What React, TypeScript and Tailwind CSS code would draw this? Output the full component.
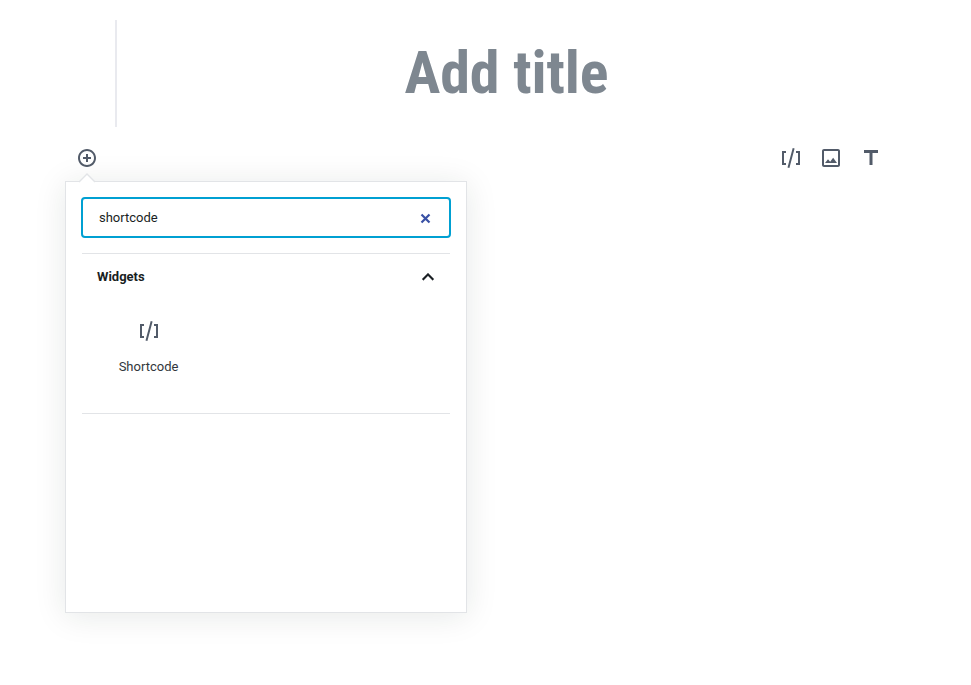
import React from "react";

function ShortcodeIcon() {
  return (
    <svg width="24" height="24" viewBox="0 0 24 24" fill="currentColor">
      <path d="M8.5,21.4l1.9,0.5l5.2-19.3l-1.9-0.5L8.5,21.4z M3,19h4v-2H5V7h2V5H3V19z M17,5v2h2v10h-2v2h4V5H17z" />
    </svg>
  );
}

function ImageIcon() {
  return (
    <svg width="24" height="24" viewBox="0 0 24 24" fill="currentColor">
      <path d="m19 5v14h-14v-14h14m0-2h-14c-1.1 0-2 0.9-2 2v14c0 1.1 0.9 2 2 2h14c1.1 0 2-0.9 2-2v-14c0-1.1-0.9-2-2-2z" />
      <path d="m14.14 11.86l-3 3.87-2.14-2.59-3 3.86h12l-3.86-5.14z" />
    </svg>
  );
}

function TextIcon() {
  return (
    <svg width="24" height="24" viewBox="0 0 24 24" fill="currentColor">
      <path d="M5 4v3h5.5v12h3V7H19V4z" />
    </svg>
  );
}

function InsertIcon() {
  return (
    <svg width="20" height="20" viewBox="0 0 20 20" fill="currentColor">
      <path d="M10 1c-5 0-9 4-9 9s4 9 9 9 9-4 9-9-4-9-9-9zm0 16c-3.9 0-7-3.1-7-7s3.1-7 7-7 7 3.1 7 7-3.1 7-7 7zm1-11H9v3H6v2h3v3h2v-3h3V9h-3V6z" />
    </svg>
  );
}

function InserterPopover() {
  return (
    <section className="relative mt-[11px] ml-[65px] flex h-[432px] w-[402px] flex-col border border-[#e2e4e7] bg-white px-[15px] pt-[15px] text-[13px] shadow-[0_3px_30px_rgba(20,35,32,0.1)]">
      <svg className="absolute -top-[9px] left-[12px]" width="18" height="10" viewBox="0 0 18 10">
        <path d="M1 9.3 9 1.3 17 9.3V10H1z" fill="#fff" />
        <path d="M1 9 9 1.1 17 9" fill="none" stroke="#e2e4e7" strokeWidth="1.4" />
      </svg>
      <div className="flex h-[41px] w-[370px] items-center justify-between rounded-[4px] border-2 border-[#00a0d2] pr-[18px] pl-4">
        <span className="leading-5 text-[#191e23]">shortcode</span>
        <svg width="11" height="11" viewBox="0 0 11 11" className="mt-[2px]" fill="none" stroke="#3850a5" strokeWidth="2.2">
          <path d="M1.5 1.5 9.5 9.5M9.5 1.5 1.5 9.5" />
        </svg>
      </div>
      <div className="mt-[15px] ml-px h-[161px] w-[368px] border-y border-[#e2e4e7]">
        <div className="flex h-[46px] items-center justify-between pr-[10px] pl-[15px] text-[#191e23]">
          <h2 className="font-bold">Widgets</h2>
          <svg width="24" height="24" viewBox="0 0 24 24" fill="currentColor" stroke="currentColor" strokeWidth="0.2">
            <path d="M12 8l-6 6 1.41 1.41L12 10.83l4.59 4.58L18 14z" />
          </svg>
        </div>
        <div className="ml-[7px] flex w-[120px] flex-col items-center pt-[19px] text-[#525b69]">
          <ShortcodeIcon />
          <span className="mt-[14px] mr-px leading-5 text-[#32373c]">Shortcode</span>
        </div>
      </div>
    </section>
  );
}

export default function App() {
  return (
    <main className="h-[685px] w-[971px] overflow-hidden bg-white pt-5 font-['Roboto',sans-serif]">
      <div className="ml-[115px] flex h-[107px] w-[782px] items-center justify-center border-l-2 border-[#e9eaef] pr-px pb-[2px]">
        <h1 className="font-['Roboto_Condensed','Roboto',sans-serif] text-[60px] leading-[80px] font-bold tracking-[-0.1px] whitespace-nowrap text-[#7e8790] [font-stretch:75%]">
          Add title
        </h1>
      </div>
      <div className="mt-[19px] flex h-6 items-center justify-between pr-[88px] pl-[77px] text-[#525b69]">
        <InsertIcon />
        <div className="flex gap-4">
          <ShortcodeIcon />
          <ImageIcon />
          <TextIcon />
        </div>
      </div>
      <InserterPopover />
    </main>
  );
}
